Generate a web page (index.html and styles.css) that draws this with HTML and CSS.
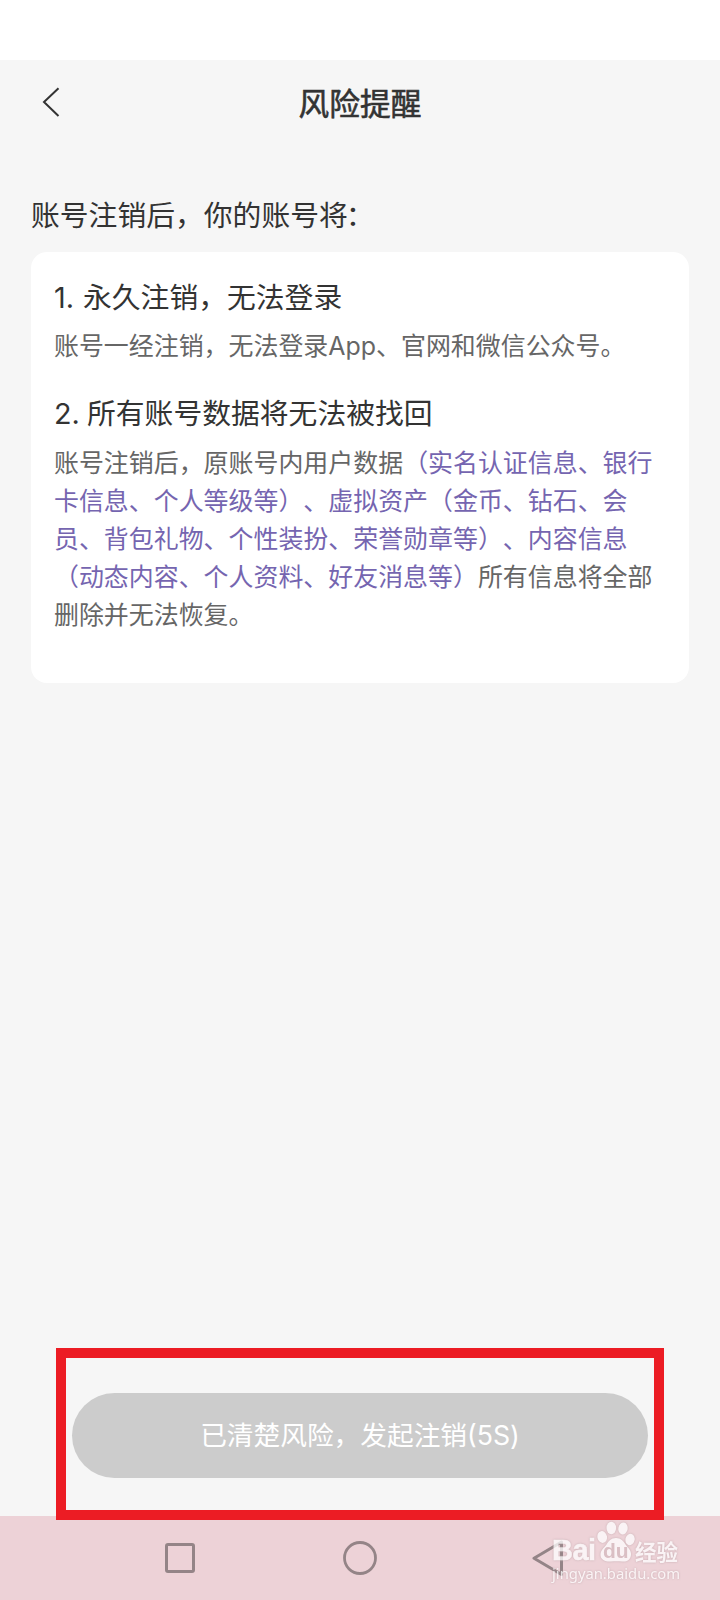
FILE: index.html
```html
<!DOCTYPE html>
<html lang="zh-CN">
<head>
<meta charset="utf-8">
<title>风险提醒</title>
<link rel="stylesheet" href="styles.css">
</head>
<body>
<div class="screen">
  <div class="status-bar"></div>
  <header class="header">
    <svg class="back" width="20" height="32" viewBox="0 0 20 32" fill="none" stroke="#333" stroke-width="2"><path d="M16.500 2.200 2 16 16.500 30"/></svg>
    <h1 class="title">风险提醒</h1>
  </header>
  <main class="content">
    <p class="lead">账号注销后，你的账号将<span class="colon">：</span></p>
    <section class="card">
      <h2 class="card-title"><span class="num num-one">1.</span>永久注销，无法登录</h2>
      <p class="card-text">账号一经注销，无法登录App、官网和微信公众号。</p>
      <h2 class="card-title second"><span class="num num-two">2.</span>所有账号数据将无法被找回</h2>
      <p class="card-text details">账号注销后，原账号内用户数据<span class="accent">（实名认证信息、银行<br>卡信息、个人等级等）、虚拟资产（金币、钻石、会<br>员、背包礼物、个性装扮、荣誉勋章等）、内容信息<br>（动态内容、个人资料、好友消息等）</span>所有信息将全部<br>删除并无法恢复。</p>
    </section>
  </main>
  <div class="highlight">
    <button class="confirm">已清楚风险，发起注销(5S)</button>
  </div>
  <nav class="nav-bar">
    <svg width="30" height="30" viewBox="0 0 30 30" fill="none" stroke="#948487" stroke-width="3"><rect x="1.5" y="1.5" width="27" height="27" rx="1.5"/></svg>
    <svg width="34" height="34" viewBox="0 0 34 34" fill="none" stroke="#948487" stroke-width="2.8"><circle cx="17" cy="17" r="15.5"/></svg>
    <svg class="nav-back" width="32" height="38" viewBox="0 0 32 38" fill="none" stroke="#948487" stroke-width="3" stroke-linejoin="round"><path d="M29.5 3 2 19.3 29.5 35.5Z"/></svg>
  </nav>
  <div class="watermark">
    <div class="brand">
      <span class="bai">Bai</span>
      <svg class="paw" width="40" height="44" viewBox="0 0 40 44">
        <g class="paw-shape">
          <ellipse cx="5.200" cy="17" rx="4.8" ry="6" transform="rotate(-12 5.200 17)"/>
          <ellipse cx="14.300" cy="8" rx="4.8" ry="6.200"/>
          <ellipse cx="26" cy="8.5" rx="4.7" ry="6" transform="rotate(10 26 8.5)"/>
          <ellipse cx="33" cy="19.500" rx="4.6" ry="5.8" transform="rotate(15 33 19.500)"/>
          <path d="M19 18c5 0 7.500 3 9.500 6.500 2.500 3.500 6 5.500 5.500 10.500-.5 5-4.500 7-8.500 6.500-4-.5-8-.5-12 0S3.500 40 3.500 35c0-5 3.500-7 6-10.500C11.500 21 14 18 19 18Z"/>
        </g>
        <text class="du" x="18.800" y="38" text-anchor="middle">du</text>
      </svg>
      <span class="jingyan">经验</span>
    </div>
    <div class="url">jingyan.baidu.com</div>
  </div>
</div>
</body>
</html>
```

FILE: styles.css
```css
* { box-sizing: border-box; margin: 0; padding: 0; }

body {
  background: #f6f6f6;
  font-family: Inter, "Noto Sans CJK SC", sans-serif;
  text-spacing-trim: space-all;
  color: #333;
}

.screen {
  position: relative;
  display: flex;
  flex-direction: column;
  width: 720px;
  height: 1600px;
  overflow: hidden;
  background: #f6f6f6;
  white-space: nowrap;
}

.status-bar { flex: none; height: 60px; background: #fff; }

.header {
  flex: none;
  display: grid;
  grid-template-columns: 80px 1fr 80px;
  align-items: center;
  height: 86px;
}

.back { margin: 0 0 2px 42px; }

.title {
  padding-top: 2px;
  text-align: center;
  font-size: 30.7px;
  line-height: 44px;
  font-weight: 400;
  -webkit-text-stroke: 0.6px #333;
}

.content { flex: 1; padding: 49px 31px 0; }

.lead { font-size: 28.8px; line-height: 42px; }
.colon { margin-left: -2px; }

.card {
  height: 431px;
  margin-top: 15px;
  padding: 26px 23px 0;
  border-radius: 16px;
  background: #fff;
}

.card-title { font-size: 28.8px; line-height: 40px; font-weight: 400; }
.card-title.second { margin-top: 29px; }

.num { display: inline-block; }
.num-one { width: 29px; }
.num-two { width: 33px; }

.card-text { margin-top: 9px; font-size: 24.95px; line-height: 38px; color: #666; }
.card-text.details { margin-top: 10px; }

.accent { color: #7565b0; }

.highlight {
  position: relative;
  z-index: 1;
  flex: none;
  width: 608px;
  height: 172px;
  margin: 0 0 -4px 56px;
  padding: 35px 6px 0;
  border: 10px solid #ec1c24;
}

.confirm {
  display: block;
  width: 576px;
  height: 85px;
  border: 0;
  border-radius: 43px;
  background: #ccc;
  color: #fff;
  font: inherit;
  font-size: 26.7px;
  line-height: 85px;
}

.nav-bar {
  flex: none;
  display: grid;
  grid-template-columns: repeat(3, 180px);
  justify-content: center;
  justify-items: center;
  align-items: center;
  height: 84px;
  background: #edd2d7;
}

.nav-back { margin-left: 15px; }

.watermark {
  position: absolute;
  left: 552px;
  top: 1521px;
  width: 134px;
  color: #fff;
  opacity: 0.75;
  filter: drop-shadow(0 0 1px #b9a0a5);
}

.brand { display: flex; align-items: flex-end; height: 43px; }
.bai { width: 45px; font: 700 29px/28px "Liberation Sans", Arial, sans-serif; letter-spacing: -0.5px; -webkit-text-stroke: 0.5px #fff; }
.paw { flex: none; }
.paw-shape { fill: #fff; }
.du { font: 700 21px "Liberation Sans", Arial, sans-serif; fill: #d4b9be; }
.jingyan { margin-left: -2px; font: 700 21.5px/27px "Noto Sans CJK SC", sans-serif; }
.url { font: 400 14.8px/20px "Noto Sans", sans-serif; margin-top: -1px; }
```
